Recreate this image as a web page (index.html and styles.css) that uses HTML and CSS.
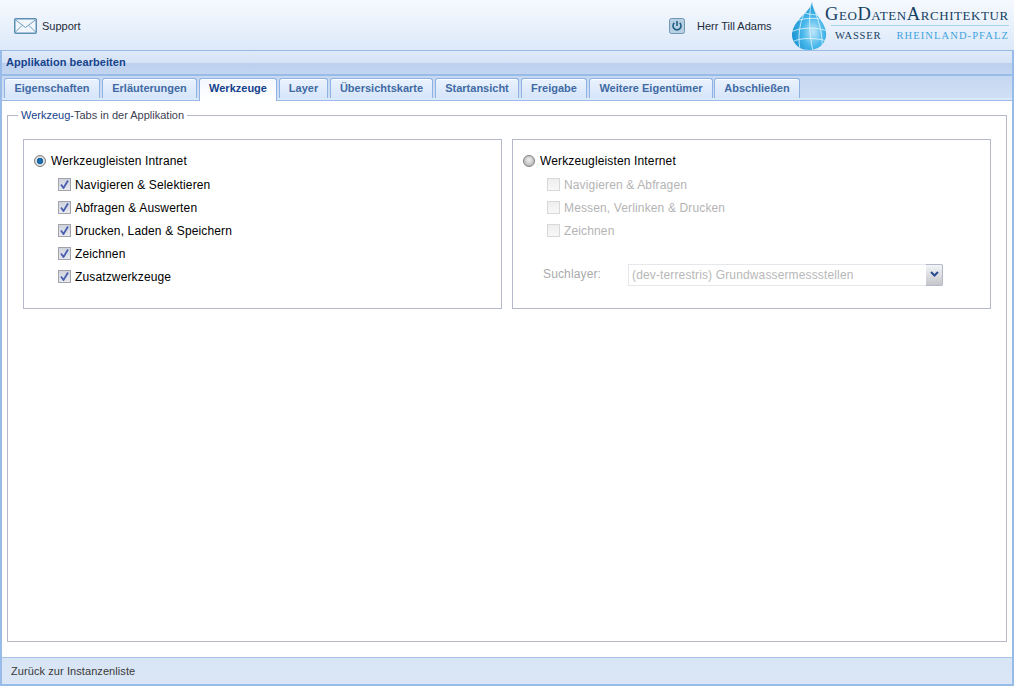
FILE: index.html
```html
<!DOCTYPE html>
<html lang="de">
<head>
<meta charset="utf-8">
<title>Applikation bearbeiten</title>
<link rel="stylesheet" href="styles.css">
</head>
<body>
<div class="page">
  <header class="top">
    <a class="support">
      <svg class="mail" width="23" height="16" viewBox="0 0 23 16"><rect x=".75" y=".75" width="21.5" height="14.5" rx="1" fill="#f1f6fd" stroke="#5d90b4" stroke-width="1.5"/><path d="M1 1.5 11.5 9.5 22 1.5M1 14.5 8 7.5M22 14.5 15 7.5" fill="none" stroke="#6f9dbe"/></svg>
      <span>Support</span>
    </a>
    <div class="user">
      <svg class="power" width="16" height="16" viewBox="0 0 16 16"><rect x=".5" y=".5" width="15" height="15" rx="2" fill="#b9d0e3" stroke="#6f97b6"/><path d="M5.3 4.9a4 4 0 1 0 5.4 0" fill="none" stroke="#1f5f86" stroke-width="1.6"/><path d="M8 3v5" stroke="#1f5f86" stroke-width="1.6"/></svg>
      <span class="username">Herr Till Adams</span>
    </div>
    <div class="logo">
      <svg class="drop" width="36" height="50" viewBox="0 0 36 50">
        <defs>
          <radialGradient id="dropfill" cx="62%" cy="62%" r="65%"><stop offset="0" stop-color="#bfe6fa"/><stop offset=".5" stop-color="#45b6ea"/><stop offset="1" stop-color="#1590cf"/></radialGradient>
          <clipPath id="dropclip"><path d="M21 1C20 8 12 13 6 21 1 28 0 34 2 39c3 7 9 10 16 10 9 0 15-5 17-13 1-7-2-12-6-18C25 13 22 8 21 1Z"/></clipPath>
        </defs>
        <path d="M21 1C20 8 12 13 6 21 1 28 0 34 2 39c3 7 9 10 16 10 9 0 15-5 17-13 1-7-2-12-6-18C25 13 22 8 21 1Z" fill="url(#dropfill)"/>
        <g clip-path="url(#dropclip)" fill="none" stroke="#e6f6fd" stroke-width=".8">
          <path d="M0 22C10 17 24 16 34 19M0 31C10 26 26 26 36 30M1 41C10 36 26 37 36 40"/>
          <path d="M20 2C10 14 6 30 9 49M20 2C18 16 18 34 22 50M21 2C26 16 32 30 31 46M13 12C22 14 27 14 27 14"/>
        </g>
      </svg>
      <div class="logotext">
        <div class="logotitle">GeoDatenArchitektur</div>
        <div class="logosub"><span class="wasser">WASSER</span><span class="rlp">RHEINLAND-PFALZ</span></div>
      </div>
    </div>
  </header>

  <main class="panel">
    <h1 class="paneltitle">Applikation bearbeiten</h1>
    <nav class="tabs">
      <a class="tab t1">Eigenschaften</a>
      <a class="tab t2">Erläuterungen</a>
      <a class="tab t3 active">Werkzeuge</a>
      <a class="tab t4">Layer</a>
      <a class="tab t5">Übersichtskarte</a>
      <a class="tab t6">Startansicht</a>
      <a class="tab t7">Freigabe</a>
      <a class="tab t8">Weitere Eigentümer</a>
      <a class="tab t9">Abschließen</a>
    </nav>
    <section class="content">
      <fieldset class="group">
        <legend><span class="hl">Werkzeug-</span>Tabs in der Applikation</legend>
        <div class="cols">
          <div class="box">
            <div class="radio-row"><span class="radio on"></span><span>Werkzeugleisten Intranet</span></div>
            <div class="check-row"><span class="check"><svg width="9" height="9" viewBox="0 0 9 9"><path d="M1 4.5 3.5 8 8 .5" fill="none" stroke="#4a5fb0" stroke-width="1.8"/></svg></span><span>Navigieren &amp; Selektieren</span></div>
            <div class="check-row"><span class="check"><svg width="9" height="9" viewBox="0 0 9 9"><path d="M1 4.5 3.5 8 8 .5" fill="none" stroke="#4a5fb0" stroke-width="1.8"/></svg></span><span>Abfragen &amp; Auswerten</span></div>
            <div class="check-row"><span class="check"><svg width="9" height="9" viewBox="0 0 9 9"><path d="M1 4.5 3.5 8 8 .5" fill="none" stroke="#4a5fb0" stroke-width="1.8"/></svg></span><span>Drucken, Laden &amp; Speichern</span></div>
            <div class="check-row"><span class="check"><svg width="9" height="9" viewBox="0 0 9 9"><path d="M1 4.5 3.5 8 8 .5" fill="none" stroke="#4a5fb0" stroke-width="1.8"/></svg></span><span>Zeichnen</span></div>
            <div class="check-row"><span class="check"><svg width="9" height="9" viewBox="0 0 9 9"><path d="M1 4.5 3.5 8 8 .5" fill="none" stroke="#4a5fb0" stroke-width="1.8"/></svg></span><span>Zusatzwerkzeuge</span></div>
          </div>
          <div class="box">
            <div class="radio-row"><span class="radio"></span><span>Werkzeugleisten Internet</span></div>
            <div class="check-row off"><span class="check"></span><span>Navigieren &amp; Abfragen</span></div>
            <div class="check-row off"><span class="check"></span><span>Messen, Verlinken &amp; Drucken</span></div>
            <div class="check-row off"><span class="check"></span><span>Zeichnen</span></div>
            <div class="search-row">
              <span class="search-label">Suchlayer:</span>
              <div class="select"><span class="select-text">(dev-terrestris) Grundwassermessstellen</span><span class="select-btn"><svg width="9" height="6" viewBox="0 0 9 6"><path d="M1 1 4.5 4.5 8 1" fill="none" stroke="#2a4d8f" stroke-width="2"/></svg></span></div>
            </div>
          </div>
        </div>
      </fieldset>
    </section>
    <footer class="bottom">Zurück zur Instanzenliste</footer>
  </main>
</div>
</body>
</html>
```
FILE: styles.css
```css
* { box-sizing: border-box; }
html, body { margin: 0; height: 100%; background: #fff; }
body { font-family: "Liberation Sans", Arial, sans-serif; font-size: 12px; color: #000; overflow: hidden; }
.page { width: 1014px; height: 686px; display: flex; flex-direction: column; }

.top { height: 50px; flex: none; display: flex; align-items: center; padding-top: 2px; background: linear-gradient(#f6f9fe, #dde9f9); color: #1d2b3a; font-size: 11px; }
.support { display: flex; align-items: center; margin-left: 14px; gap: 5px; }
.mail, .power { display: block; flex: none; }
.user { display: flex; align-items: center; margin-left: auto; gap: 12px; }
.username { width: 75px; white-space: nowrap; }
.logo { display: flex; margin: -2px 5px 0 19px; height: 50px; align-items: flex-start; position: relative; z-index: 1; }
.drop { display: block; margin-top: 1px; }
.logotext { width: 184px; margin-left: -2px; }
.logotitle { font-family: "Liberation Serif", serif; font-variant: small-caps; font-size: 18.5px; line-height: 20px; margin-top: 4px; color: #14405f; letter-spacing: .57px; white-space: nowrap; padding-bottom: 1px; }
.logosub { margin-left: 6px; border-top: 1px solid #a6d5ef; display: flex; justify-content: space-between; padding: 3px 0 0 4px; font-family: "Liberation Serif", serif; font-size: 10.5px; line-height: 13px; white-space: nowrap; }
.wasser { color: #14405f; letter-spacing: .8px; }
.rlp { color: #3fa4de; letter-spacing: 1.1px; }

.panel { flex: 1; min-height: 0; display: flex; flex-direction: column; border: 2px solid #99bbe8; border-width: 1px 2px 2px 2px; }
.paneltitle { margin: 0; height: 25px; flex: none; font-size: 11px; font-weight: bold; line-height: 22px; letter-spacing: .05px; color: #15428b; padding-left: 4px; background: linear-gradient(#dfe9f8 0, #d6e3f6 50%, #bcd0ee 52%, #c3d5f0 100%); border-bottom: 2px solid #99bbe8; }

.tabs { height: 25px; flex: none; display: flex; align-items: flex-start; padding: 2px 0 0 2px; gap: 2px; background: linear-gradient(#c5d7f1 0, #cfdff5 22px, #dce9fa 22px); border-bottom: 1px solid #99bbe8; }
.tab { display: block; height: 20px; font-size: 11px; font-weight: bold; line-height: 19px; text-align: center; color: #416aa3; background: linear-gradient(#eaf2fd, #d6e5fa); border: 1px solid #8db2e3; border-bottom: 0; border-radius: 3px 3px 0 0; box-shadow: inset 0 1px 0 #fff; white-space: nowrap; }
.tab.active { height: 23px; color: #15428b; background: linear-gradient(#f4f8fe, #fff); position: relative; z-index: 1; }
.t1 { width: 96px; } .t2 { width: 95px; } .t3 { width: 78px; } .t4 { width: 49px; } .t5 { width: 103px; }
.t6 { width: 84px; } .t7 { width: 66px; } .t8 { width: 124px; margin-right: -1px; } .t9 { width: 86px; }

.content { flex: 1; min-height: 0; background: #fff; padding: 8px 5px 15px 5px; }
.group { margin: 0; height: 100%; min-width: 0; border: 1px solid #b5b8c8; padding: 17px 15px 0 15px; }
.group legend { padding: 0 3px; margin-left: -5px; font-size: 11px; line-height: 13px; color: #3c3f52; }
.hl { color: #15428b; }
.cols { display: flex; gap: 10px; }
.box { width: 479px; height: 170px; border: 1px solid #b5b8c8; padding: 14px 10px 0; letter-spacing: .14px; }
.radio-row { display: flex; align-items: center; height: 14px; gap: 5px; white-space: nowrap; }
.radio { width: 12px; height: 12px; flex: none; border-radius: 50%; border: 1px solid #7e7e7e; background: radial-gradient(circle at 50% 40%, #eee, #aaa); }
.radio.on { background: radial-gradient(circle, #1c6aa8 0 3px, #e8e8e8 3.6px, #c0c0c0 100%); }
.check-row { display: flex; align-items: center; height: 23px; margin-left: 24px; gap: 4px; white-space: nowrap; }
.radio-row + .check-row { margin-top: 5px; }
.check { width: 13px; height: 13px; flex: none; display: flex; align-items: center; justify-content: center; border: 1px solid #a2a2aa; background: linear-gradient(#cfd3dc, #e8eaef); }
.off { color: #b4b4b4; }
.off .check { border-color: #d8d8d8; background: linear-gradient(#eee, #f8f8f8); }
.search-row { display: flex; margin: 22px 0 0 20px; height: 22px; }
.search-label { width: 85px; color: #aaa; line-height: 20px; }
.select { width: 315px; height: 22px; display: flex; border: 1px solid #e4e7ec; background: #fff; }
.select-text { flex: 1; padding-left: 3px; line-height: 20px; color: #b8b8b8; white-space: nowrap; }
.select-btn { width: 17px; height: 22px; margin: -1px -1px 0 0; flex: none; display: flex; justify-content: center; padding-top: 6px; border: 1px solid #b5b8c8; border-left: 0; border-radius: 0 2px 2px 0; background: linear-gradient(#f3f4f6, #c4c6ca); }

.bottom { height: 27px; flex: none; border-top: 1px solid #a9c3e6; background: linear-gradient(#d8e5f5, #dae6f5); color: #3a3a3a; font-size: 11px; letter-spacing: .08px; line-height: 27px; padding-left: 9px; }
```
